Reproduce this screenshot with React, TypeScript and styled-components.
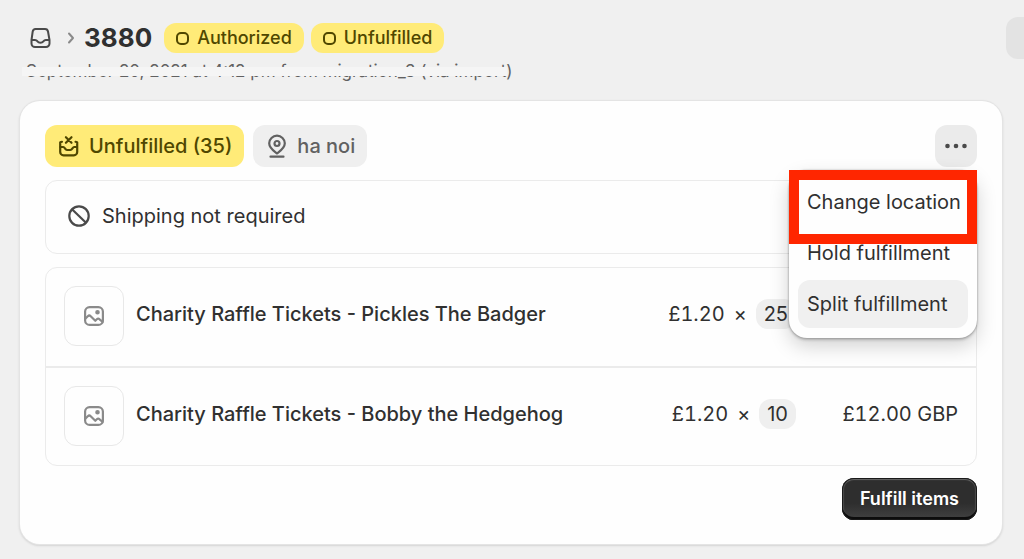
import React from "react";
import styled, { createGlobalStyle } from "styled-components";

const GlobalStyle = createGlobalStyle`
  *, *::before, *::after { box-sizing: border-box; }
  body {
    margin: 0;
    background: #f0f0f0;
    color: #303030;
    font-family: Inter, "Liberation Sans", sans-serif;
    font-size: 20px;
    line-height: 24px;
  }
  button { font: inherit; color: inherit; border: 0; cursor: pointer; }
  svg { display: block; flex: none; }
`;

const Page = styled.div`
  overflow-x: hidden;
  padding: 17px 0 14px;
`;

const Header = styled.header`
  display: flex;
  align-items: center;
  height: 42px;
  padding-left: 28px;
`;

const HomeLink = styled.a`
  display: flex;
  align-items: center;
  gap: 14px;
  margin-right: 8px;
  color: #4a4a4a;
`;

const Title = styled.h1`
  margin: 0 12px 0 0;
  font-size: 26px;
  line-height: 32px;
  font-weight: 650;
`;

const StatusList = styled.div`
  display: flex;
  gap: 7px;
`;

const Status = styled.span`
  display: flex;
  align-items: center;
  gap: 8px;
  height: 30px;
  padding: 0 12px;
  border-radius: 12px;
  background: #ffeb78;
  color: #4f4700;
  font-size: 18px;
  font-weight: 550;
`;

const EdgeButton = styled.button`
  width: 18px;
  height: 42px;
  margin-left: auto;
  padding: 0;
  border-radius: 12px 0 0 12px;
  background: #e3e3e3;
`;

const Subtitle = styled.p`
  position: relative;
  width: fit-content;
  margin: 0 0 18px 26px;
  color: #616161;
  font-size: 17px;
  line-height: 24px;

  &::after {
    content: "";
    position: absolute;
    left: -4px;
    right: 5px;
    top: 8px;
    height: 9px;
    background: #f5f5f5;
  }
`;

const Card = styled.main`
  margin: 0 22px 0 20px;
  padding: 24px 25px;
  border-radius: 20px;
  background: #fefefe;
  box-shadow: 0 0 0 1px #e4e4e4, 0 1px 2px 1px #d4d4d4;
`;

const CardHeader = styled.div`
  display: flex;
  align-items: center;
  gap: 9px;
  margin-bottom: 13px;
`;

const Tag = styled.span<{ $tone?: "attention" }>`
  display: flex;
  align-items: center;
  gap: 8px;
  height: 42px;
  padding: 0 12px;
  border-radius: 12px;
  background: ${(p) => (p.$tone ? "#ffeb78" : "#efefef")};
  color: ${(p) => (p.$tone ? "#4f4700" : "#616161")};
  font-weight: ${(p) => (p.$tone ? 550 : 500)};
`;

const MenuAnchor = styled.div`
  position: relative;
  margin-left: auto;
`;

const MoreButton = styled.button`
  display: flex;
  align-items: center;
  justify-content: center;
  width: 42px;
  height: 42px;
  padding: 0;
  border-radius: 12px;
  background: #ebebeb;
  color: #4a4a4a;
`;

const Menu = styled.div`
  position: absolute;
  z-index: 1;
  top: 45px;
  right: 0;
  display: grid;
  grid-template-columns: minmax(0, 1fr);
  gap: 3px;
  width: 188px;
  padding: 8px 9px 10px;
  border-radius: 18px;
  background: #fefefe;
  box-shadow: 0 0 2px rgba(0, 0, 0, 0.3), 0 2px 3px rgba(0, 0, 0, 0.2), 0 8px 20px rgba(0, 0, 0, 0.18);
`;

const MenuItem = styled.button<{ $active?: boolean }>`
  height: 48px;
  padding: 0 0 0 9px;
  border-radius: 12px;
  background: ${(p) => (p.$active ? "#f0f0f0" : "transparent")};
  text-align: left;
  white-space: nowrap;
`;

const Highlight = styled.div`
  position: absolute;
  top: 0;
  left: 0;
  right: 0;
  height: 74px;
  border: 10px solid #ff2600;
  pointer-events: none;
`;

const Notice = styled.section`
  display: flex;
  align-items: center;
  gap: 11px;
  height: 74px;
  margin-bottom: 13px;
  padding: 0 21px 2px;
  border: 1px solid #ebebeb;
  border-radius: 12px;
`;

const Items = styled.table`
  width: 100%;
  border: 1px solid #ebebeb;
  border-radius: 12px;
  border-spacing: 0;
`;

const Row = styled.tr`
  height: 98px;
  & + & { height: 99px; }
  & + & > td { border-top: 2px solid #ebebeb; }
`;

const Cell = styled.td`
  padding: 31px 0 0;
  line-height: 30px;
  vertical-align: top;
`;

const ThumbCell = styled(Cell)`
  width: 90px;
  padding: 18px 0 0 18px;
`;

const NameCell = styled(Cell)`
  font-weight: 500;
`;

const PriceCell = styled(Cell)`
  width: 150px;
`;

const TotalCell = styled(Cell)`
  width: 180px;
  padding-right: 18px;
  text-align: right;
  font-variant-numeric: tabular-nums;
`;

const Thumb = styled.div`
  display: flex;
  align-items: center;
  justify-content: center;
  width: 60px;
  height: 60px;
  border: 1px solid #e8e8e8;
  border-radius: 12px;
  color: #8a8a8a;
`;

const UnitPrice = styled.div`
  display: flex;
  align-items: center;
  justify-content: flex-end;
  gap: 9px;
  font-variant-numeric: tabular-nums;
`;

const Quantity = styled.span`
  height: 30px;
  padding: 0 8px;
  border-radius: 12px;
  background: #efefef;
  font-variant-numeric: normal;
`;

const Actions = styled.div`
  display: flex;
  justify-content: flex-end;
  margin-top: 12px;
`;

const PrimaryButton = styled.button`
  height: 42px;
  padding: 0 18px;
  border-radius: 12px;
  background: linear-gradient(#2e2e2e 60%, #424242);
  box-shadow: inset 0 0 0 1px #1a1a1a, inset 0 -3px 0 #0c0c0c, inset 0 2px 1px #666, inset 2px 0 1px #4c4c4c, inset -2px 0 1px #4c4c4c;
  color: #fff;
  font-size: 18px;
  font-weight: 600;
`;

const OrdersIcon = () => (
  <svg width="24" height="24" viewBox="0 0 24 24" fill="none" stroke="currentColor" strokeWidth="2" strokeLinejoin="round">
    <path d="M7.5 3h9.5a3 3 0 0 1 3 2.500l1.500 8.500v3.500a3.500 3.500 0 0 1-3.500 3.500H7a3.500 3.500 0 0 1-3.500-3.500V14L4.700 5.500A3 3 0 0 1 7.500 3Z" />
    <path d="M3.500 14h3.500c1.500 0 1.800.500 2.400 1.300.700.900 1.500 1.400 3 1.400s2.300-.500 3-1.400c.600-.800 1-1.300 2.400-1.300h3.700" />
  </svg>
);

const ChevronIcon = () => (
  <svg width="10" height="14" viewBox="0 0 10 14" fill="none" stroke="#8a8a8a" strokeWidth="2" strokeLinecap="round" strokeLinejoin="round">
    <path d="m3 2.500 4 4.500-4 4.500" />
  </svg>
);

const PendingIcon = () => (
  <svg width="13" height="13" viewBox="0 0 13 13" fill="none" stroke="currentColor" strokeWidth="2">
    <rect x="1" y="1" width="11" height="11" rx="4" />
  </svg>
);

const InboxIcon = () => (
  <svg width="24" height="24" viewBox="0 0 24 24" fill="none" stroke="currentColor" strokeWidth="2.200" strokeLinecap="round" strokeLinejoin="round">
    <path d="m8.900 3.200 5.600 5.600m0-5.600L8.900 8.800" />
    <path d="M5 7.800 3.200 8.300V18a3.300 3.300 0 0 0 3.300 3.300h10.400a3.300 3.300 0 0 0 3.300-3.300V8.300L18.500 7.800" />
    <path d="M3.500 13h2.800c1.500 0 1.800 3 3.700 3h3.400c1.900 0 2.200-3 3.700-3h2.800" />
  </svg>
);

const PinIcon = () => (
  <svg width="24" height="24" viewBox="0 0 24 24" fill="none" stroke="currentColor" strokeWidth="2.200" strokeLinecap="round" strokeLinejoin="round">
    <path d="M12 19.500c-2.500-2-7.800-5.200-7.800-10.200a7.800 7.600 0 0 1 15.600 0c0 5-5.300 8.200-7.800 10.200Z" />
    <circle cx="12" cy="9.500" r="2.500" />
    <path d="M5.500 22.700h13" />
  </svg>
);

const DotsIcon = () => (
  <svg width="24" height="24" viewBox="0 0 24 24" fill="currentColor">
    <circle cx="3.500" cy="12" r="2.300" />
    <circle cx="12" cy="12" r="2.300" />
    <circle cx="20.500" cy="12" r="2.300" />
  </svg>
);

const DisabledIcon = () => (
  <svg width="24" height="24" viewBox="0 0 24 24" fill="none" stroke="#4a4a4a" strokeWidth="2.200">
    <circle cx="12" cy="12" r="9.700" />
    <path d="m5 5.200 14 13.600" />
  </svg>
);

const ImageIcon = () => (
  <svg width="20" height="20" viewBox="0 0 20 20" fill="none" stroke="currentColor" strokeWidth="2.200" strokeLinecap="round" strokeLinejoin="round">
    <rect x="1.100" y="1.100" width="17.800" height="17.800" rx="4.500" />
    <path d="m1.500 12.500 2.300-2.300c.9-.9 2-.9 2.900 0l4.600 4.600 1.500-1.500c.8-.8 2-.8 2.800 0l3 2.500" />
    <circle cx="13.500" cy="6.300" r="1.200" fill="currentColor" />
  </svg>
);

const items = [
  { name: "Charity Raffle Tickets - Pickles The Badger", price: "£1.20", quantity: 25, total: "" },
  { name: "Charity Raffle Tickets - Bobby the Hedgehog", price: "£1.20", quantity: 10, total: "£12.00 GBP" },
];

export default function App() {
  return (
    <Page>
      <GlobalStyle />
      <Header>
        <HomeLink href="#orders" aria-label="Orders">
          <OrdersIcon />
          <ChevronIcon />
        </HomeLink>
        <Title>3880</Title>
        <StatusList>
          <Status><PendingIcon />Authorized</Status>
          <Status><PendingIcon />Unfulfilled</Status>
        </StatusList>
        <EdgeButton aria-label="Order actions" />
      </Header>
      <Subtitle>September 20, 2021 at 4:12 pm from migration_3 (via import)</Subtitle>
      <Card>
        <CardHeader>
          <Tag $tone="attention"><InboxIcon />Unfulfilled (35)</Tag>
          <Tag><PinIcon />ha noi</Tag>
          <MenuAnchor>
            <MoreButton aria-label="More actions" aria-expanded="true"><DotsIcon /></MoreButton>
            <Menu>
              <MenuItem>Change location</MenuItem>
              <MenuItem>Hold fulfillment</MenuItem>
              <MenuItem $active>Split fulfillment</MenuItem>
              <Highlight />
            </Menu>
          </MenuAnchor>
        </CardHeader>
        <Notice><DisabledIcon />Shipping not required</Notice>
        <Items>
          <tbody>
            {items.map((item) => (
              <Row key={item.name}>
                <ThumbCell><Thumb><ImageIcon /></Thumb></ThumbCell>
                <NameCell>{item.name}</NameCell>
                <PriceCell>
                  <UnitPrice>{item.price}<span>×</span><Quantity>{item.quantity}</Quantity></UnitPrice>
                </PriceCell>
                <TotalCell>{item.total}</TotalCell>
              </Row>
            ))}
          </tbody>
        </Items>
        <Actions><PrimaryButton>Fulfill items</PrimaryButton></Actions>
      </Card>
    </Page>
  );
}
